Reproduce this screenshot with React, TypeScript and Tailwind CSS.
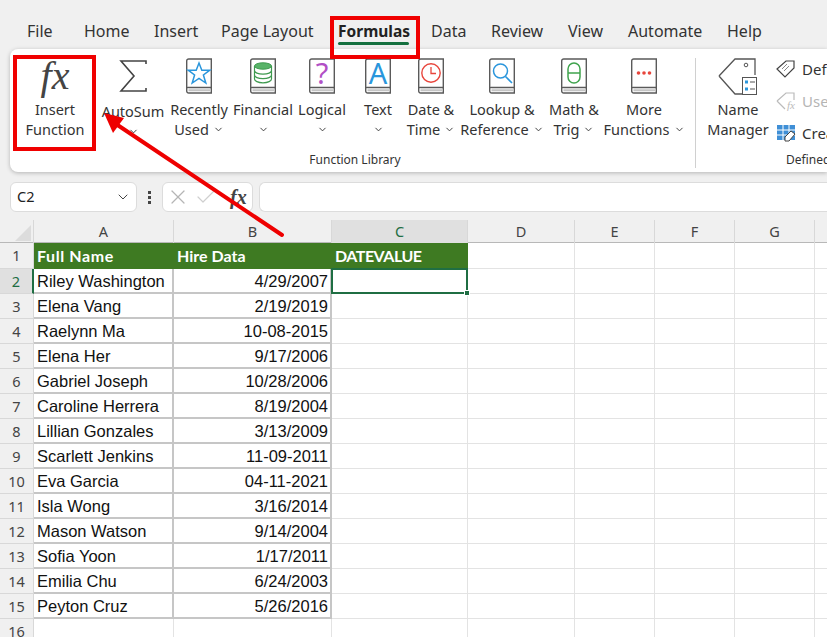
import type { ReactNode } from "react";
import { Check, ChevronDown, X } from "lucide-react";

const tabs = [
  { label: "File", width: "w-[57px]" },
  { label: "Home", width: "w-[70px]" },
  { label: "Insert", width: "w-[67px]" },
  { label: "Page Layout", width: "w-[117px]" },
  { label: "Formulas", width: "w-[93px]", active: true },
  { label: "Data", width: "w-[60px]" },
  { label: "Review", width: "w-[77px]" },
  { label: "View", width: "w-[60px]" },
  { label: "Automate", width: "w-[99px]" },
  { label: "Help", width: "w-[60px]" },
];

const rows = [
  ["Riley Washington", "4/29/2007"],
  ["Elena Vang", "2/19/2019"],
  ["Raelynn Ma", "10-08-2015"],
  ["Elena Her", "9/17/2006"],
  ["Gabriel Joseph", "10/28/2006"],
  ["Caroline Herrera", "8/19/2004"],
  ["Lillian Gonzales", "3/13/2009"],
  ["Scarlett Jenkins", "11-09-2011"],
  ["Eva Garcia", "04-11-2021"],
  ["Isla Wong", "3/16/2014"],
  ["Mason Watson", "9/14/2004"],
  ["Sofia Yoon", "1/17/2011"],
  ["Emilia Chu", "6/24/2003"],
  ["Peyton Cruz", "5/26/2016"],
];

const gridCols = "grid grid-cols-[34px_140px_158px_136px_107px_80px_80px_80px_80px]";

function Book({ children }: { children: ReactNode }) {
  return (
    <svg width="28" height="36" viewBox="0 0 28 36" fill="none" className="overflow-visible">
      <path d="M1.7 30V3A2 2 0 0 1 3.7 1H26.3V35H3.7A2 2 0 0 1 1.7 33V30A2 2 0 0 1 3.7 29.5H26.3" stroke="#5a5a5a" strokeWidth="1.4" />
      <path d="M3.5 32.2H26" stroke="#c4c4c4" strokeWidth="2" />
      {children}
    </svg>
  );
}

function RibbonButton({ width, lines, chevron, icon, labelClass }: { width: string; lines: string[]; chevron: boolean; icon: ReactNode; labelClass?: string }) {
  return (
    <div className={`${width} flex flex-col items-center shrink-0`}>
      <div className="h-[36px] flex items-center justify-center">{icon}</div>
      <div className={`mt-[5px] text-center text-[14.5px] leading-[20px] text-[#333] whitespace-nowrap ${labelClass ?? ""}`}>
        <div>{lines[0]}</div>
        {lines[1] ? (
          <div className="flex items-center justify-center gap-[4px]">
            {lines[1]}
            {chevron && <ChevronDown size={11} strokeWidth={2} />}
          </div>
        ) : (
          <div className="flex h-[20px] items-center justify-center">
            <ChevronDown size={11} strokeWidth={2} />
          </div>
        )}
      </div>
    </div>
  );
}

function SmallAction({ label, muted, icon }: { label: string; muted?: boolean; icon: ReactNode }) {
  return (
    <div className={`h-[32px] flex items-center gap-[6px] text-[15px] whitespace-nowrap ${muted ? "text-[#b5b5b5]" : "text-[#333]"}`}>
      {icon}
      {label}
    </div>
  );
}

function Ribbon() {
  return (
    <div className="ml-[10px] h-[123px] bg-white rounded-l-lg shadow-[0_1px_4px_rgba(0,0,0,0.25)] flex pl-[5px] pt-[9px] overflow-hidden">
      <div className="w-[680px] shrink-0 flex flex-col">
        <div className="flex h-[92px]">
          <div className="w-[80px] mr-[5px] flex flex-col items-center shrink-0">
            <div className="h-[36px] flex items-center justify-center font-['Liberation_Serif',serif] italic text-[40px] leading-[36px] text-[#444]">fx</div>
            <div className="mt-[5px] text-center text-[14.5px] leading-[20px] text-[#333]">
              Insert
              <br />
              Function
            </div>
          </div>
          <RibbonButton
            width="w-[66px]"
            lines={["AutoSum"]}
            chevron
            labelClass="pt-[2px]"
            icon={
              <svg width="28" height="34" viewBox="0 0 28 34" fill="none">
                <path d="M27 5V2H2L15 17L2 32H27V29" stroke="#444" strokeWidth="1.6" />
              </svg>
            }
          />
          <RibbonButton
            width="w-[66px]"
            lines={["Recently", "Used"]}
            chevron
            icon={
              <Book>
                <path d="M14 5L16.8 12.2H24.8L18.4 17L20.8 25L14 20.3L7.2 25L9.6 17L3.2 12.2H11.2Z" stroke="#2a96dc" strokeWidth="1.5" />
              </Book>
            }
          />
          <RibbonButton
            width="w-[62px]"
            lines={["Financial"]}
            chevron
            icon={
              <Book>
                <ellipse cx="14" cy="8" rx="8.5" ry="3.2" fill="#58b368" stroke="#3f9a50" />
                <path d="M5.5 8V21C5.5 23 9 24.8 14 24.8C19 24.8 22.5 23 22.5 21V8M5.5 12.5C5.5 14.5 9 16.2 14 16.2C19 16.2 22.5 14.5 22.5 12.5M5.5 17C5.5 19 9 20.7 14 20.7C19 20.7 22.5 19 22.5 17" stroke="#3f9a50" strokeWidth="1.2" />
              </Book>
            }
          />
          <RibbonButton
            width="w-[56px]"
            lines={["Logical"]}
            chevron
            icon={
              <Book>
                <text x="14" y="26" textAnchor="middle" fontSize="29" fontFamily="Noto Sans, sans-serif" fill="#b14fc5">?</text>
              </Book>
            }
          />
          <RibbonButton
            width="w-[56px]"
            lines={["Text"]}
            chevron
            icon={
              <Book>
                <text x="14" y="26" textAnchor="middle" fontSize="29" fontFamily="Noto Sans, sans-serif" fill="#2a96dc">A</text>
              </Book>
            }
          />
          <RibbonButton
            width="w-[50px]"
            lines={["Date &", "Time"]}
            chevron
            icon={
              <Book>
                <circle cx="14" cy="15" r="9.2" stroke="#e8453c" strokeWidth="1.4" />
                <path d="M14 9V15.5H19" stroke="#e8453c" strokeWidth="1.3" />
              </Book>
            }
          />
          <RibbonButton
            width="w-[92px]"
            lines={["Lookup &", "Reference"]}
            chevron
            icon={
              <Book>
                <circle cx="12.5" cy="13" r="7" stroke="#2a96dc" strokeWidth="1.5" />
                <path d="M17.5 18.5L24 25" stroke="#2a96dc" strokeWidth="1.6" />
              </Book>
            }
          />
          <RibbonButton
            width="w-[52px]"
            lines={["Math &", "Trig"]}
            chevron
            icon={
              <Book>
                <rect x="8" y="5" width="12" height="20" rx="6" stroke="#3fa34d" strokeWidth="1.5" />
                <path d="M8 15H20" stroke="#3fa34d" strokeWidth="1.5" />
              </Book>
            }
          />
          <RibbonButton
            width="w-[88px]"
            lines={["More", "Functions"]}
            chevron
            icon={
              <Book>
                <circle cx="8.5" cy="15" r="1.8" fill="#e8453c" />
                <circle cx="14" cy="15" r="1.8" fill="#e8453c" />
                <circle cx="19.5" cy="15" r="1.8" fill="#e8453c" />
              </Book>
            }
          />
        </div>
        <div className="mt-[1px] text-center text-[12px] leading-[18px] text-[#333]">Function Library</div>
      </div>

      <div className="w-px h-[110px] bg-[#d0d0d0] shrink-0" />

      <div className="flex flex-col shrink-0 pl-[8px]">
        <div className="flex h-[92px]">
          <div className="w-[68px] flex flex-col items-center shrink-0">
            <svg width="40" height="38" viewBox="0 0 40 38" fill="none">
              <path d="M1 18L17 1H37V17M24 36H17L1 18" stroke="#555" strokeWidth="1.3" />
              <circle cx="28" cy="7" r="1.8" stroke="#555" />
              <rect x="24.5" y="19.5" width="14" height="17" fill="#fff" stroke="#555" />
              <path d="M27 24H30M27 31H30" stroke="#2a96dc" strokeWidth="3" />
              <path d="M32 24H37M32 31H37" stroke="#555" />
            </svg>
            <div className="mt-[3px] text-center text-[14.5px] leading-[20px] text-[#333]">
              Name
              <br />
              Manager
            </div>
          </div>
          <div className="-mt-[5px] pl-[4px] flex flex-col">
            <SmallAction
              label="Define Name"
              icon={
                <svg width="20" height="20" viewBox="0 0 20 20" fill="none">
                  <path d="M1 10L10 2H18V9L9 18Z" stroke="#444" strokeWidth="1.2" />
                  <path d="M6 10L11 5M8 12L13 7" stroke="#888" />
                </svg>
              }
            />
            <SmallAction
              label="Use in Formula"
              muted
              icon={
                <svg width="20" height="20" viewBox="0 0 20 20" fill="none">
                  <path d="M1 10L10 2H18V9M9 18L1 10" stroke="#bbb" strokeWidth="1.2" />
                  <text x="11" y="18" fontSize="11" fontStyle="italic" fontFamily="Liberation Serif, serif" fill="#bbb">fx</text>
                </svg>
              }
            />
            <SmallAction
              label="Create from Selection"
              icon={
                <svg width="20" height="20" viewBox="0 0 20 20" fill="none">
                  <rect x="1" y="2" width="18" height="15" fill="#3f8fd6" />
                  <path d="M1 7H19M1 12H19M7 2V17M13 2V17" stroke="#fff" />
                  <path d="M9 14L15 8L19 11L13 18H9Z" fill="#fff" stroke="#444" />
                </svg>
              }
            />
          </div>
        </div>
        <div className="mt-[1px] pl-[82px] text-[12px] leading-[18px] text-[#333] whitespace-nowrap">Defined Names</div>
      </div>
    </div>
  );
}

function FormulaBar() {
  return (
    <div className="mt-[10px] h-[30px] flex items-stretch pl-[10px] gap-[6px]">
      <div className="w-[127px] bg-white border border-[#dcdcdc] rounded-md flex items-center justify-between pl-[6px] pr-[5px] text-[14.5px] text-[#222]">
        C2
        <ChevronDown size={16} strokeWidth={1.5} className="text-[#444]" />
      </div>
      <div className="w-[13px] flex flex-col items-center justify-center gap-[2px]">
        <span className="w-[3px] h-[3px] bg-[#444]" />
        <span className="w-[3px] h-[3px] bg-[#444]" />
        <span className="w-[3px] h-[3px] bg-[#444]" />
      </div>
      <div className="w-[91px] bg-white border border-[#dcdcdc] rounded-md flex items-center pl-[3px] gap-[4px]">
        <X size={24} strokeWidth={1.2} className="text-[#b5b5b5]" />
        <Check size={24} strokeWidth={1.2} className="text-[#cfcfcf]" />
        <span className="pl-[8px] font-['Liberation_Serif',serif] italic font-bold text-[20px] leading-none text-[#444]">fx</span>
      </div>
      <div className="flex-1 bg-white border border-r-0 border-[#dcdcdc] rounded-l-md" />
    </div>
  );
}

function RowHead({ n, active, tall }: { n: number; active?: boolean; tall?: boolean }) {
  return (
    <div
      className={`flex items-center justify-center font-['Noto_Sans',sans-serif] text-[14.5px] border-b border-r border-[#d8d8d8] ${tall ? "" : "pt-[2px]"} ${
        active ? "bg-[#e0e0e0] text-[#1f6e43] border-r-2 border-r-[#1f6e43]" : "bg-[#f0f0f0] text-[#444]"
      }`}
    >
      {n}
    </div>
  );
}

function Blank() {
  return <div className="border-b border-r border-[#e3e3e3]" />;
}

function Row({ n, name, date }: { n: number; name: string; date: string }) {
  const active = n === 2;
  return (
    <>
      <RowHead n={n} active={active} />
      <div className="border-b-2 border-r-2 border-[#c6c6c6] pl-[3px] pt-[2px] flex items-center whitespace-nowrap">{name}</div>
      <div className="border-b-2 border-r-2 border-[#c6c6c6] pr-[2px] pt-[2px] flex items-center justify-end whitespace-nowrap">{date}</div>
      {active ? (
        <div className="relative border-2 border-[#1f6e43] -ml-px -mt-px">
          <div className="absolute -right-[4px] -bottom-[4px] w-[6px] h-[6px] bg-[#1f6e43] border border-white" />
        </div>
      ) : (
        <Blank />
      )}
      {[0, 1, 2, 3, 4].map((i) => (
        <Blank key={i} />
      ))}
    </>
  );
}

function Sheet() {
  const cols = ["A", "B", "C", "D", "E", "F", "G", "H"];
  const emptyCols = [0, 1, 2, 3, 4];
  return (
    <div className="mt-[8px] bg-white font-['Liberation_Sans',sans-serif]">
      <div className={`${gridCols} h-[23px] bg-[#f0f0f0] border-b border-[#b8b8b8] font-['Noto_Sans',sans-serif] text-[14.5px]`}>
        <div className="relative border-r border-[#d8d8d8]">
          <div className="absolute right-[2px] bottom-[2px] w-0 h-0 border-l-[16px] border-b-[16px] border-l-transparent border-b-[#dcdcdc]" />
        </div>
        {cols.map((col) => (
          <div
            key={col}
            className={`flex items-center justify-center pt-[1px] border-r border-[#d8d8d8] ${col === "C" ? "bg-[#e0e0e0] text-[#1f6e43]" : "text-[#444]"}`}
          >
            {col}
          </div>
        ))}
      </div>

      <div className={`${gridCols} grid-rows-[26px] auto-rows-[25px] text-[16.5px] text-[#111]`}>
        <RowHead n={1} tall />
        <div className="bg-[#3e7a22] text-white font-['Lato',sans-serif] font-bold text-[16px] tracking-[0.6px] pl-[3px] flex items-center">Full Name</div>
        <div className="bg-[#3e7a22] text-white font-['Lato',sans-serif] font-bold text-[16px] pl-[3px] flex items-center">Hire Data</div>
        <div className="bg-[#3e7a22] text-white font-['Lato',sans-serif] font-bold text-[16px] tracking-[-0.5px] pl-[3px] flex items-center">DATEVALUE</div>
        {emptyCols.map((i) => (
          <Blank key={i} />
        ))}

        {rows.map(([name, date], i) => (
          <Row key={name} n={i + 2} name={name} date={date} />
        ))}

        <RowHead n={16} />
        <Blank />
        <Blank />
        <Blank />
        {emptyCols.map((i) => (
          <Blank key={i} />
        ))}
      </div>
    </div>
  );
}

export default function App() {
  return (
    <div className="relative w-[827px] h-[637px] overflow-hidden bg-[#f0f0f0] font-['Noto_Sans',sans-serif]">
      <div className="h-[49px] flex items-start pl-[27px] pt-[20px] text-[16px] leading-[22px] text-[#333]">
        {tabs.map((tab) => (
          <div key={tab.label} className={`${tab.width} shrink-0 flex flex-col items-start ${tab.active ? "font-bold text-[15.5px] text-[#222]" : ""}`}>
            {tab.label}
            {tab.active && <span className="w-[71px] h-[3px] bg-[#14703f] rounded-full" />}
          </div>
        ))}
      </div>
      <Ribbon />
      <FormulaBar />
      <Sheet />

      <div className="absolute left-[13px] top-[55px] w-[83px] h-[96px] border-[4px] border-[#f00000]" />
      <div className="absolute left-[330px] top-[16px] w-[90px] h-[43px] border-[4px] border-[#f00000]" />
      <svg className="absolute left-0 top-0 pointer-events-none" width="827" height="637" viewBox="0 0 827 637" fill="none">
        <path d="M282 235L116 124" stroke="#ee0000" strokeWidth="4" strokeLinecap="round" />
        <path d="M104 113L124 118L113 133Z" fill="#ee0000" />
      </svg>
    </div>
  );
}
